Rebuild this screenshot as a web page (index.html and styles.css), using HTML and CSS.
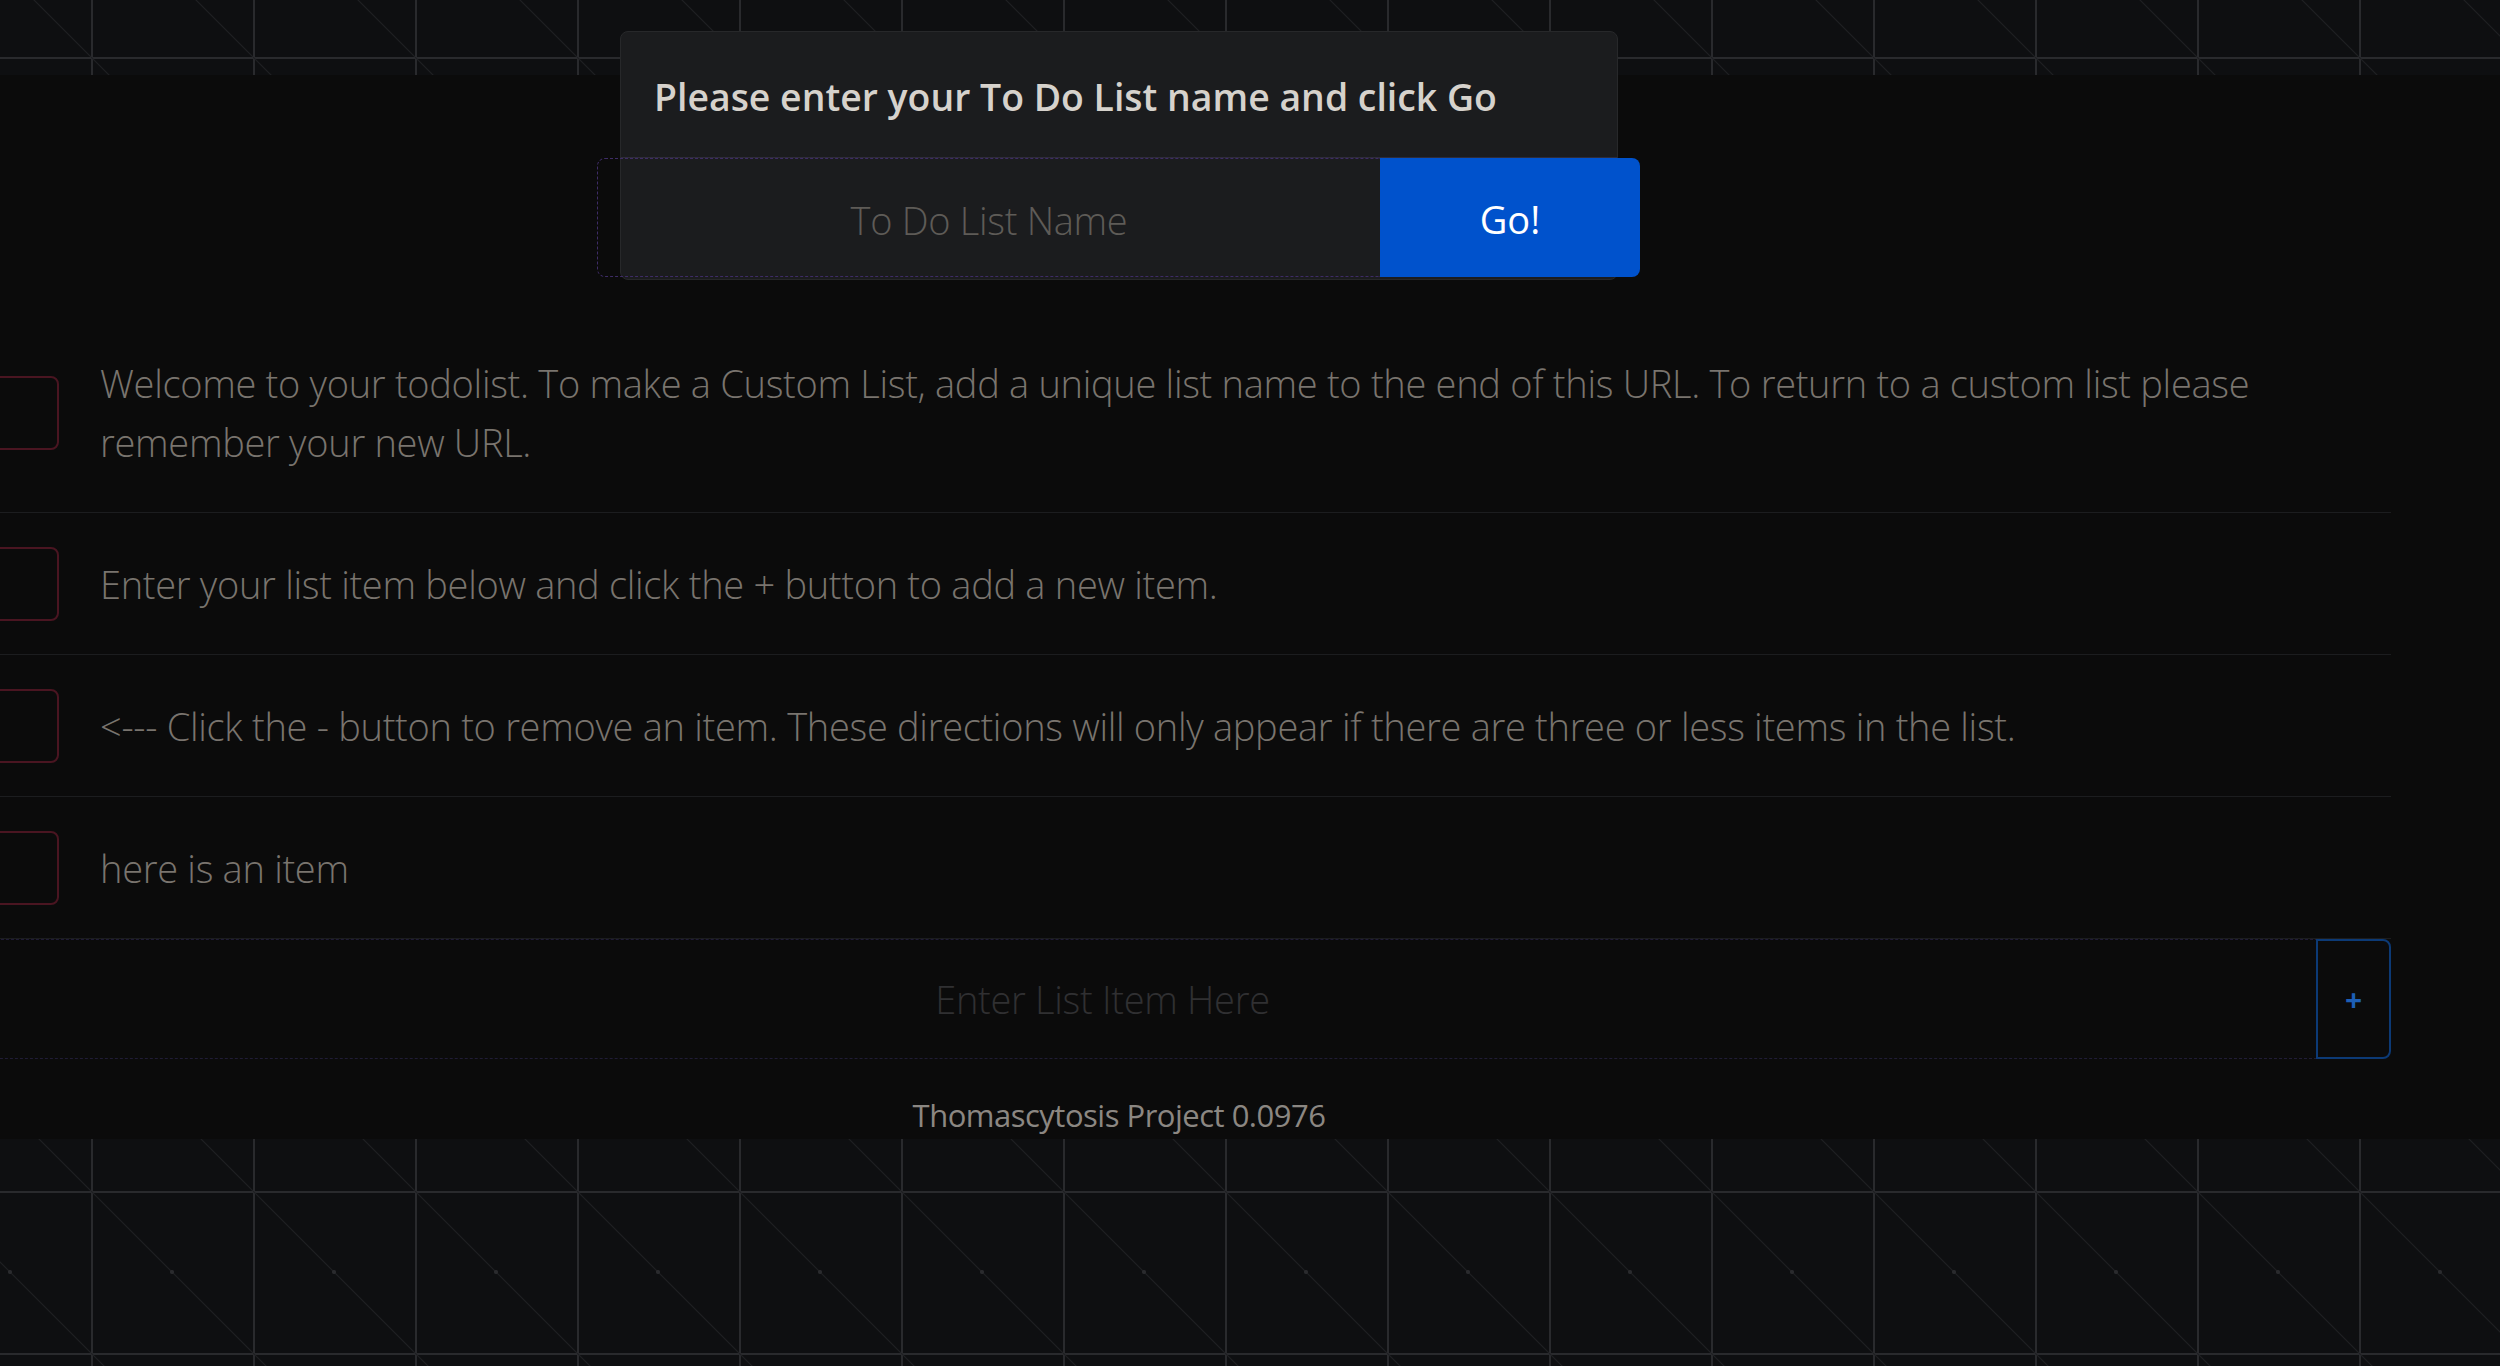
FILE: index.html
```html
<!DOCTYPE html>
<html lang="en">
<head>
<meta charset="utf-8">
<title>To Do List</title>
<link rel="stylesheet" href="styles.css">
</head>
<body>
<main class="page">
  <section class="name-card">
    <h1 class="name-title">Please enter your To Do List name and click Go</h1>
    <form class="name-form">
      <input class="name-input" type="text" placeholder="To Do List Name">
      <button class="go-btn" type="button">Go!</button>
    </form>
  </section>

  <div class="list">
    <div class="item">
      <span class="check"></span>
      <p class="item-text">Welcome to your todolist. To make a Custom List, add a unique list name to the end of this URL. To return to a custom list please remember your new URL.</p>
    </div>
    <div class="item">
      <span class="check"></span>
      <p class="item-text">Enter your list item below and click the + button to add a new item.</p>
    </div>
    <div class="item">
      <span class="check"></span>
      <p class="item-text">&lt;--- Click the - button to remove an item. These directions will only appear if there are three or less items in the list.</p>
    </div>
    <div class="item">
      <span class="check"></span>
      <p class="item-text">here is an item</p>
    </div>
    <form class="add-form">
      <input class="add-input" type="text" placeholder="Enter List Item Here">
      <button class="add-btn" type="button">+</button>
    </form>
  </div>

  <footer class="footer">Thomascytosis Project 0.0976</footer>
</main>
</body>
</html>
```

FILE: styles.css
```css
html, body {
  margin: 0;
  padding: 0;
}

body {
  width: 2500px;
  height: 1366px;
  overflow: hidden;
  font-family: "Open Sans", "Noto Sans", "Liberation Sans", sans-serif;
  background-color: #0e0f11;
  background-image:
    radial-gradient(circle at 50% 50%, #2a2b2e 0, #2a2b2e 1.5px, transparent 2.5px),
    linear-gradient(45deg, transparent calc(50% - 1px), #1e1f22 50%, transparent calc(50% + 1px)),
    linear-gradient(to right, #292a2d 0, #292a2d 2px, transparent 2px),
    linear-gradient(to bottom, #292a2d 0, #292a2d 2px, transparent 2px);
  background-size: 162px 162px;
  background-position: 91px 57px;
}

.page {
  margin-top: 75px;
  height: 1064px;
  background: #0b0b0b;
  display: flex;
  flex-direction: column;
}

/* ---------- name card ---------- */
.name-card {
  box-sizing: border-box;
  width: 998px;
  margin: -44px 0 0 620px;
  background: #1b1c1e;
  border: 1px solid #27282a;
  border-radius: 8px;
  padding-bottom: 2px;
  display: flex;
  flex-direction: column;
}

.name-title {
  box-sizing: border-box;
  height: 126px;
  margin: 0;
  padding: 4px 0 0 33px;
  display: flex;
  align-items: center;
  font-size: 37.4px;
  font-weight: 600;
  color: #d6d2cc;
  border-bottom: 1px solid #2f2c3a;
}

.name-form {
  display: flex;
  height: 119px;
  margin: 0 -23px 0 -24px;
}

.name-input {
  flex: 1;
  min-width: 0;
  box-sizing: border-box;
  background: transparent;
  border: 1px dashed #3e2c66;
  border-right: none;
  border-radius: 8px 0 0 8px;
  text-align: center;
  font-family: inherit;
  font-size: 38px;
  font-weight: 300;
  letter-spacing: -0.3px;
  color: #cfcac4;
  outline: none;
  padding: 5px 0 0;
}

.name-input::placeholder {
  color: #5e5b57;
}

.go-btn {
  width: 260px;
  flex: none;
  background: #0052cc;
  border: none;
  border-radius: 0 8px 8px 0;
  color: #ffffff;
  font-family: inherit;
  font-size: 38px;
  font-weight: 400;
  padding: 3px 0 0;
}

/* ---------- list ---------- */
.list {
  margin: 33px 0 0 -112px;
  width: 2503px;
  display: flex;
  flex-direction: column;
}

.item {
  display: flex;
  align-items: center;
  gap: 41px;
  padding: 34px 0 33px 97px;
  border-bottom: 1px solid #1c1d1f;
}

.check {
  flex: none;
  box-sizing: border-box;
  width: 74px;
  height: 74px;
  border: 2px solid #4a1521;
  border-radius: 8px;
}

.item-text {
  margin: 7px 0;
  font-size: 38px;
  font-weight: 300;
  line-height: 59px;
  letter-spacing: -0.3px;
  color: #79746e;
}

/* ---------- add form ---------- */
.add-form {
  display: flex;
  height: 120px;
}

.add-input {
  flex: 1;
  min-width: 0;
  box-sizing: border-box;
  background: transparent;
  border: 1px dashed #201c36;
  border-right: none;
  border-radius: 8px 0 0 8px;
  text-align: center;
  font-family: inherit;
  font-size: 38px;
  font-weight: 300;
  letter-spacing: -0.3px;
  color: #cfcac4;
  outline: none;
  padding: 0;
}

.add-input::placeholder {
  color: #303032;
}

.add-btn {
  flex: none;
  box-sizing: border-box;
  width: 75px;
  background: transparent;
  border: 2px solid #0c3a76;
  border-radius: 0 8px 8px 0;
  color: #1d5fb6;
  font-family: inherit;
  font-size: 30px;
  font-weight: 700;
  padding: 0;
}

/* ---------- footer ---------- */
.footer {
  width: 998px;
  margin: 34px 0 0 620px;
  text-align: center;
  font-size: 31px;
  font-weight: 400;
  line-height: 44px;
  letter-spacing: -0.5px;
  color: #8b8782;
}
```
